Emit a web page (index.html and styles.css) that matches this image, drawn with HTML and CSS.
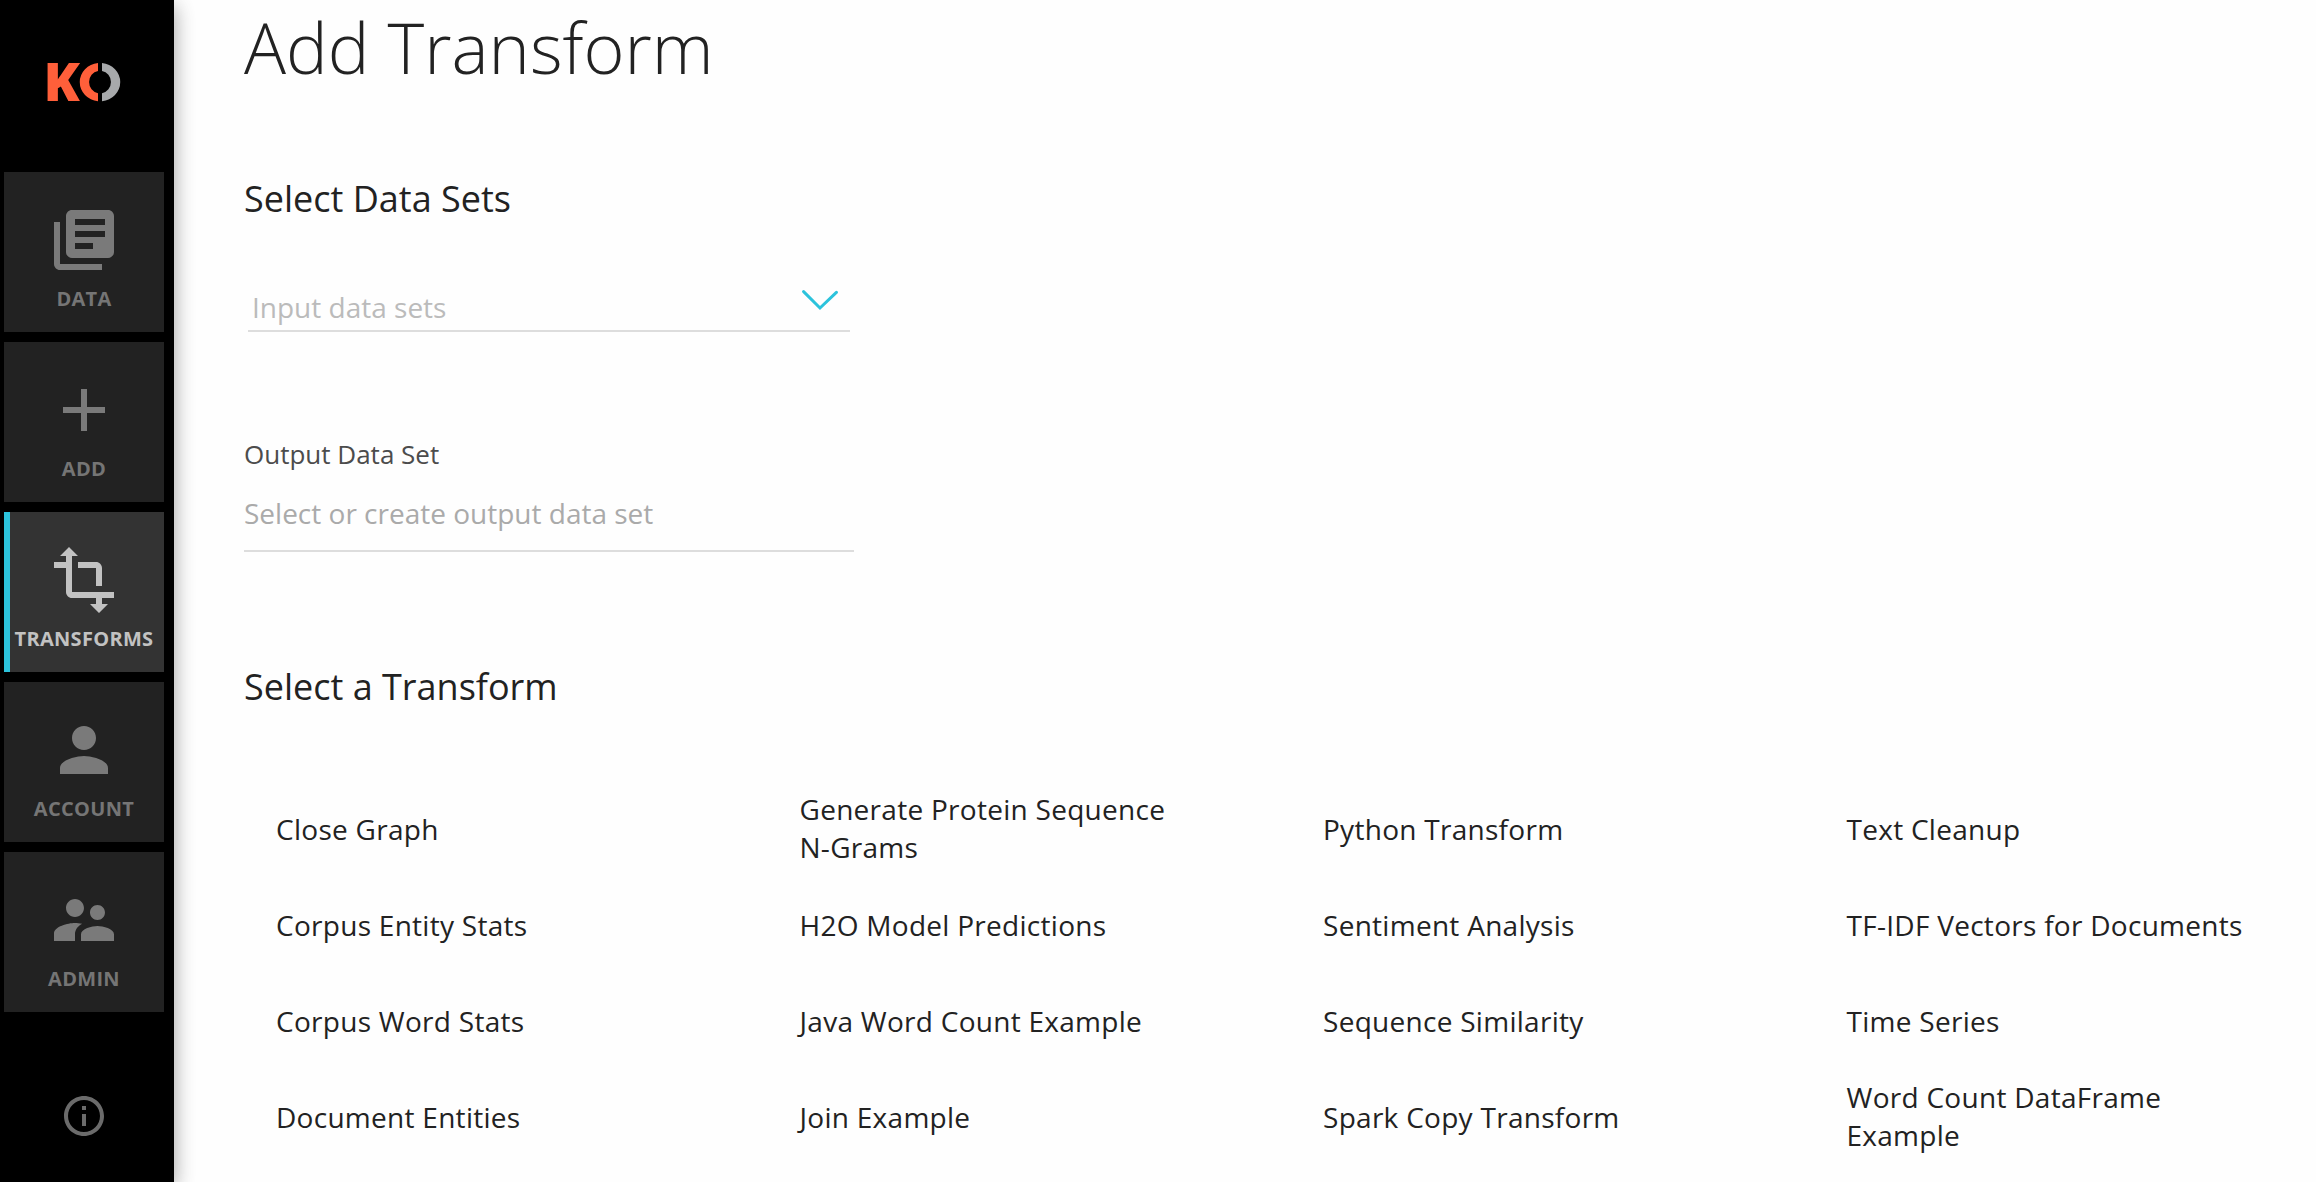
FILE: index.html
```html
<!DOCTYPE html>
<html lang="en">
<head>
<meta charset="utf-8">
<title>Add Transform</title>
<link rel="stylesheet" href="styles.css">
</head>
<body>
<div class="app">
  <nav class="sidebar">
    <a class="logo">
      <svg width="74" height="40" viewBox="0 0 74 40">
        <text class="logo-k" x="-4.4" y="37.8">K</text>
        <path class="logo-left" d="M50 -.1A20.3 19.3 0 0 0 50 38.3V30.3A11 11.4 0 0 1 50 7.9Z"/>
        <path class="logo-right" d="M54 -.1A20.3 19.3 0 0 1 54 38.3V30.3A11 11.4 0 0 0 54 7.9Z"/>
      </svg>
    </a>
    <ul class="menu">
      <li class="item">
        <svg class="icon" viewBox="0 0 24 24"><path d="M4 6H2v14c0 1.1.9 2 2 2h14v-2H4V6zm16-4H8c-1.1 0-2 .9-2 2v12c0 1.1.9 2 2 2h12c1.1 0 2-.9 2-2V4c0-1.1-.9-2-2-2zm-1 9H9V9h10v2zm-4 4H9v-2h6v2zm4-8H9V5h10v2z"/></svg>
        <span>DATA</span>
      </li>
      <li class="item">
        <svg class="icon" viewBox="0 0 24 24"><path d="M19 13h-6v6h-2v-6H5v-2h6V5h2v6h6v2z"/></svg>
        <span>ADD</span>
      </li>
      <li class="item active">
        <svg class="icon" viewBox="0 0 24 24"><path d="M22 18v-2H8V4h2L7 1 4 4h2v2H2v2h4v8c0 1.1.9 2 2 2h8v2h-2l3 3 3-3h-2v-2h4zM10 8h6v6h2V8c0-1.1-.9-2-2-2h-6v2z"/></svg>
        <span>TRANSFORMS</span>
      </li>
      <li class="item">
        <svg class="icon" viewBox="0 0 24 24"><path d="M12 12c2.21 0 4-1.79 4-4s-1.79-4-4-4-4 1.79-4 4 1.79 4 4 4zm0 2c-2.67 0-8 1.34-8 4v2h16v-2c0-2.66-5.33-4-8-4z"/></svg>
        <span>ACCOUNT</span>
      </li>
      <li class="item">
        <svg class="icon" viewBox="0 0 24 24"><path d="M16.5 12c1.38 0 2.49-1.12 2.49-2.5S17.88 7 16.5 7C15.12 7 14 8.12 14 9.5s1.12 2.5 2.5 2.5zM9 11c1.66 0 2.99-1.34 2.99-3S10.66 5 9 5C7.34 5 6 6.34 6 8s1.34 3 3 3zm7.5 3c-1.83 0-5.5.92-5.5 2.75V19h11v-2.25c0-1.83-3.67-2.75-5.5-2.75zM9 13c-2.33 0-7 1.17-7 3.5V19h7v-2.25c0-.85.33-2.34 2.37-3.47C10.5 13.1 9.66 13 9 13z"/></svg>
        <span>ADMIN</span>
      </li>
    </ul>
    <a class="about">
      <svg width="48" height="48" viewBox="0 0 24 24"><path d="M11 17h2v-6h-2v6zm1-15C6.48 2 2 6.48 2 12s4.48 10 10 10 10-4.48 10-10S17.52 2 12 2zm0 18c-4.41 0-8-3.59-8-8s3.59-8 8-8 8 3.59 8 8-3.59 8-8 8zM11 9h2V7h-2v2z"/></svg>
    </a>
  </nav>
  <main class="content">
    <h1>Add Transform</h1>
    <h2>Select Data Sets</h2>
    <div class="select">
      <span>Input data sets</span>
      <svg class="chevron" width="36" height="21" viewBox="0 0 36 21"><path d="M1.6 1.6 18 18 34.4 2.4"/></svg>
    </div>
    <div class="field">
      <label>Output Data Set</label>
      <div class="input">Select or create output data set</div>
    </div>
    <h2>Select a Transform</h2>
    <ul class="transforms">
      <li>Close Graph</li>
      <li>Corpus Entity Stats</li>
      <li>Corpus Word Stats</li>
      <li>Document Entities</li>
      <li class="two-line">Generate Protein Sequence N-Grams</li>
      <li>H2O Model Predictions</li>
      <li>Java Word Count Example</li>
      <li>Join Example</li>
      <li>Python Transform</li>
      <li>Sentiment Analysis</li>
      <li>Sequence Similarity</li>
      <li>Spark Copy Transform</li>
      <li>Text Cleanup</li>
      <li>TF-IDF Vectors for Documents</li>
      <li>Time Series</li>
      <li class="two-line">Word Count DataFrame Example</li>
    </ul>
  </main>
</div>
</body>
</html>
```
FILE: styles.css
```css
* { box-sizing: border-box; }

body {
  margin: 0;
  background: #fefefe;
  color: #222;
  font-family: "Open Sans", sans-serif;
}

ul { margin: 0; padding: 0; list-style: none; }

.app { display: flex; height: 1182px; overflow: hidden; }

/* Sidebar */
.sidebar {
  display: flex;
  flex-direction: column;
  flex: none;
  width: 174px;
  padding: 0 10px 0 4px;
  background: #000;
  box-shadow: 0 6px 20px rgba(0, 0, 0, .16), 0 6px 20px rgba(0, 0, 0, .23);
}

.logo { height: 172px; padding: 63px 0 0 44px; }
.logo svg { display: block; overflow: visible; }
.logo-k { font-size: 53px; font-weight: 800; fill: #ff5f3a; }
.logo-left { fill: #ff5f3a; }
.logo-right { fill: #a7a9ab; }

.menu { display: flex; flex-direction: column; gap: 10px; }

.item {
  display: flex;
  flex-direction: column;
  align-items: center;
  height: 160px;
  padding-top: 32px;
  background: #222;
  color: #757575;
  font-size: 20px;
  font-weight: 700;
  line-height: 28px;
  letter-spacing: .3px;
}
.item span { margin-top: 9px; }

.icon { width: 72px; height: 72px; fill: #7a7a7a; }

.active {
  background: linear-gradient(to right, #2cc3dc 6px, #333 6px);
  color: #c2c2c2;
}
.active .icon { fill: #c2c2c2; }

.about { padding: 80px 0 0 56px; }
.about svg { display: block; fill: #6b6b6b; }

/* Content */
.content { flex: none; width: 2164px; padding: 7px 0 0 70px; }

h1 { margin: 0; font-size: 70px; font-weight: 300; line-height: 80px; }

h2 { margin: 87px 0 0; font-size: 36px; font-weight: 400; line-height: 50px; }

.select {
  display: flex;
  justify-content: space-between;
  align-items: flex-start;
  width: 602px;
  height: 45px;
  margin: 63px 0 0 4px;
  padding: 0 12px 0 4px;
  border-bottom: 2px solid #ddd;
  color: #bbb;
  font-size: 28px;
  line-height: 40px;
}
.chevron { margin-top: 3px; fill: none; stroke: #2cc3dc; stroke-width: 3; stroke-linecap: round; }

.field { width: 610px; margin-top: 104px; }
.field label { display: block; color: #4c4c4c; font-size: 26px; line-height: 36px; }
.input {
  margin-top: 21px;
  padding-bottom: 17px;
  border-bottom: 2px solid #ddd;
  color: #aaa;
  font-size: 28px;
  line-height: 40px;
}
.field + h2 { margin-top: 110px; }

.transforms {
  display: grid;
  grid-auto-flow: column;
  grid-template: repeat(4, 96px) / repeat(4, 1fr);
  margin-top: 69px;
  font-size: 28px;
  line-height: 38px;
  letter-spacing: .01em;
}
.transforms li { display: flex; align-items: center; padding: 0 91px 0 32px; }
.transforms .two-line { padding-bottom: 2px; }
```
